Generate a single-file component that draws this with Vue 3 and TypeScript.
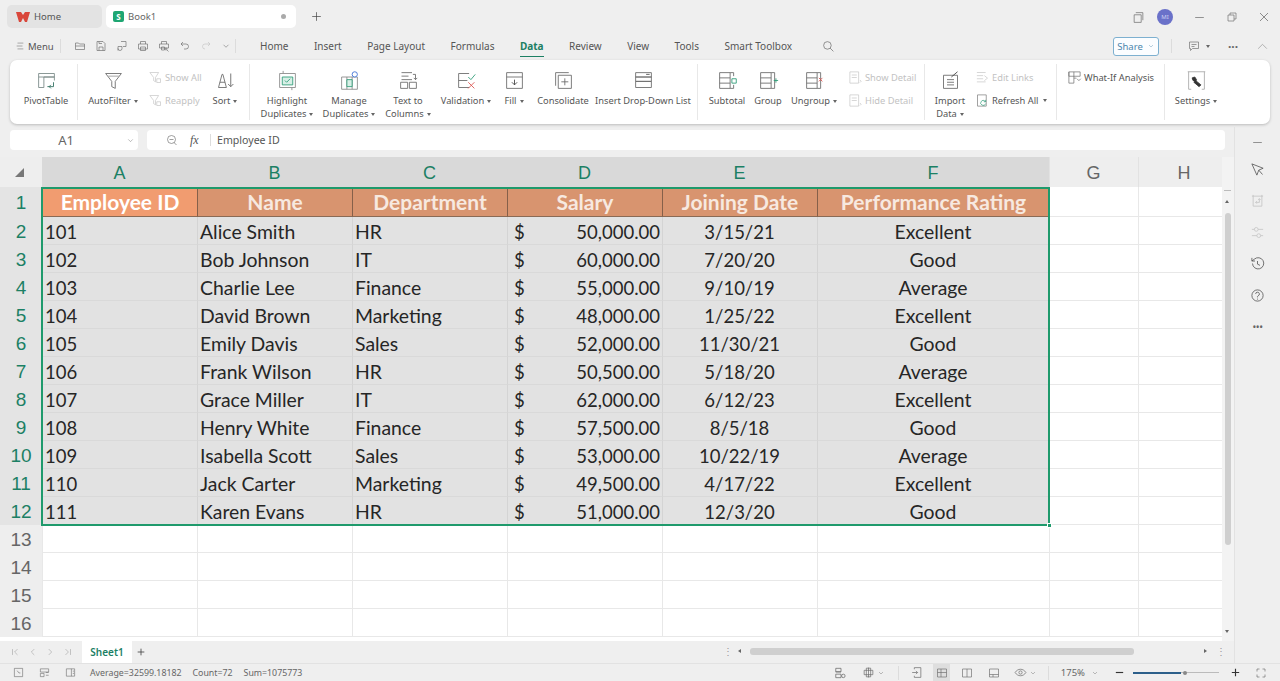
<script setup lang="ts">
import { h } from 'vue'

type Part = { d: string; c?: string; f?: string }
const G = '#6b6b6b'
const L = '#c4c4c4'
const icons: Record<string, Part[]> = {
  pivot: [{ d: 'M3 4h18v4H3zM3 8v12h6V8M9 8h12v4', c: '#7a8a88' }, { d: 'M13 19h7m0-5v5m-3-2-2 2 2 2', c: '#2f6f5f' }],
  filter: [{ d: 'M3 4h18l-7 9v8l-4-2v-6z' }, { d: 'M6 7h12', c: '#999' }],
  filterL: [{ d: 'M3 4h14l-5 8v7l-3-2v-5z', c: L }, { d: 'M14 14h6v6h-6z', c: L }],
  sort: [{ d: 'M4 20 8 5h1l4 15M5.500 14h6M4 20h9' }, { d: 'M18 4v15m-3-3 3 3 3-3', c: '#666' }],
  high: [{ d: 'M7 1v3M17 20v3M3 4h18v16H3z', c: '#8a8a8a' }, { d: 'M6 8h12v9H6z', c: '#2e9b77', f: '#d8efe6' }, { d: 'm9 12 2 2 4-4', c: '#2e9b77' }],
  manage: [{ d: 'M3 8h18v14H3zM9 8v14M15 8v14', c: '#8a8a8a' }, { d: 'M9 11h6v8H9z', c: '#2e9b77', f: '#d8efe6' }, { d: 'M21 5a3 3 0 1 1-6 0 3 3 0 0 1 6 0z', c: '#3b6fd4', f: '#fff' }],
  text: [{ d: 'M4 3h12M4 7h8M4 11h12M17 5h3v6m-2-2 2 2 2-2M3 14h8v7H3zM13 14h8v7h-8z' }],
  valid: [{ d: 'M3 4h12M3 4v16h12M3 12h10' }, { d: 'm14 8 3 3 5-6', c: '#2e9b77' }, { d: 'm14 14 7 7m0-7-7 7', c: '#d9534f' }],
  fill: [{ d: 'M3 3h18v18H3zM3 8h18' }, { d: 'M12 11v6m-3-3 3 3 3-3', c: '#444' }],
  cons: [{ d: 'M6 6h15v15H6zM3 18V3h15M13.500 9.500v8M9.500 13.500h8' }],
  drop: [{ d: 'M3 3h18v5H3zM3 8h18v5H3zM3 13h18v7H3z' }, { d: 'M15 5h4', c: '#555' }],
  sub: [{ d: 'M3 3h12v18H3zM3 9h12M3 15h12M15 3h4v4M15 21h4v-4' }, { d: 'M17 10h5v5h-5z', c: '#2e9b77' }],
  group: [{ d: 'M3 3h12v18H3zM3 9h12M3 15h12M15 3h4v18h-4' }, { d: 'M18 12h5m-2.500-2.500v5', c: '#2e9b77' }],
  ungroup: [{ d: 'M3 3h12v18H3zM3 9h12M3 15h12M15 3h4v18h-4' }, { d: 'm17 9 4 4m0-4-4 4', c: '#d9534f' }],
  detail: [{ d: 'M3 3h14v18H3zM6 8h8M6 12h8M19 16l2 2-2 2', c: L }],
  imp: [{ d: 'M4 6h16v15H4zM8 11h8M8 14h8M8 17h8' }, { d: 'm13 8 7-6', c: '#444' }],
  links: [{ d: 'M3 4h14M3 9h10M3 14h10M3 19h14M15 9l5 4-5 4', c: L }],
  refresh: [{ d: 'M4 3h14v18H4z', c: '#777' }, { d: 'M17 17a4 4 0 1 1-1-4l1 1m0-3v3h-3', c: '#2e9b77' }],
  whatif: [{ d: 'M3 3h18v7H3zM3 3v18h8V3M11 13h4' }, { d: 'm16 14 3 3 3-3', c: '#666' }],
  settings: [{ d: 'M2 2h20M3 2v20M21 2v20M3 22h3M18 22h3', c: '#aaa' }, { d: 'M7 9l3-1 2 3-1 2-3-1zM11 12l6 5-2 2-6-5z', c: '#333', f: '#333' }],
  folder: [{ d: 'M3 6h6l2 2h10v11H3zM3 12h18' }],
  save: [{ d: 'M4 3h12l4 4v14H4zM8 21v-7h8v7M8 3v4h6' }],
  share: [{ d: 'M10 3h10v10h-6M4 21v-8h8v4a4 4 0 0 1-8 0' }],
  print: [{ d: 'M7 8V3h10v5M3 8h18v10H3zM7 14h10v7H7z' }],
  preview: [{ d: 'M7 8V3h10v5M3 8h18v8H3zM7 14h6v6H7z' }, { d: 'M18 18a2 2 0 1 1-4 0 2 2 0 0 1 4 0zm0 2 3 3' }],
  undo: [{ d: 'M8 4 4 8l4 4M4 8h10a5 5 0 0 1 0 10h-4' }],
  redo: [{ d: 'm16 4 4 4-4 4M20 8H10a5 5 0 0 0 0 10', c: L }],
  chev: [{ d: 'm6 9 6 6 6-6' }],
  menu: [{ d: 'M6 5h14M4 12h14M6 19h14' }],
  search: [{ d: 'M17 10a7 7 0 1 1-14 0 7 7 0 0 1 14 0zm-2 5 6 6' }],
  dup: [{ d: 'M4 7h13v14H4zM7 3h13v14' }],
  min: [{ d: 'M4 12h16' }],
  restore: [{ d: 'M4 8h12v12H4zM8 8V4h12v12h-4' }],
  close: [{ d: 'm4 4 16 16M20 4 4 20' }],
  comment: [{ d: 'M3 4h18v13H9l-4 4v-4H3zM7 9h10M7 13h6' }],
  up: [{ d: 'm4 16 8-8 8 8' }],
  zoom: [{ d: 'M19 11a8 8 0 1 1-16 0 8 8 0 0 1 16 0zm-3 6 5 5M7 11h8' }],
  cursor: [{ d: 'm3 3 18 7-7 3-3 8zM14 13l6 7', c: '#555' }],
  crop: [{ d: 'M5 3v18h14V3M3 5h18M15 9v6H9m2-2-2 2 2 2M15 9l-2 2m2-2 2 2', c: L }],
  sliders: [{ d: 'M3 7h4m6 0h8M3 17h8m6 0h4M7 7a3 3 0 1 0 6 0 3 3 0 0 0-6 0zM11 17a3 3 0 1 0 6 0 3 3 0 0 0-6 0z', c: L }],
  history: [{ d: 'M4 12a9 9 0 1 0 3-7L3 8M3 3v5h5M12 8v5l4 2', c: '#555' }],
  help: [{ d: 'M21 12a9 9 0 1 1-18 0 9 9 0 0 1 18 0zM9 9.500a3 3 0 1 1 4 3c-1 .5-1 1-1 2.500M12 17v1.500', c: '#555' }],
  first: [{ d: 'M6 5v14M18 5l-7 7 7 7' }],
  prev: [{ d: 'm15 5-7 7 7 7' }],
  next: [{ d: 'm9 5 7 7-7 7' }],
  last: [{ d: 'M18 5v14M6 5l7 7-7 7' }],
  plus: [{ d: 'M12 4v16M4 12h16' }],
  clock: [{ d: 'M3 3h18v18H3zM9 8l4 5h3' }],
  layout: [{ d: 'M3 4h18v7H3zM3 14h8v7H3zM15 12h6M15 18h6' }],
  panel: [{ d: 'M3 4h18v16H3zM14 4v16M17 9h3M17 14h3' }],
  grid2: [{ d: 'M3 4h9v6H3zM3 14h9v6H3zM3 10h9' }, { d: 'M19 17a3 3 0 1 1-6 0 3 3 0 0 1 6 0z' }],
  globe: [{ d: 'M12 3v18M4 8h16v8H4zM8 4h8v16H8z' }],
  page: [{ d: 'M4 12h10M11 9l3 3-3 3M8 6V3h12v18H8v-3' }],
  normal: [{ d: 'M3 4h18v16H3zM10 4v16M3 11h18' }],
  read: [{ d: 'M3 4h18v16H3zM12 4v16' }],
  pageb: [{ d: 'M3 4h18v16H3zM3 15h18M10 15v5' }],
  eye: [{ d: 'M2 12c5-8 15-8 20 0-5 8-15 8-20 0zM15 12a3 3 0 1 1-6 0 3 3 0 0 1 6 0z' }],
  full: [{ d: 'M4 9V4h5M15 4h5v5M20 15v5h-5M9 20H4v-5' }]
}

const Ico = (p: { n: string; s?: number; c?: string; w?: number }) =>
  h('svg', { viewBox: '0 0 24 24', width: p.s ?? 14, height: p.s ?? 14, fill: 'none', style: 'flex:none;display:block;overflow:visible' },
    (icons[p.n] ?? []).map((x) => h('path', { d: x.d, stroke: x.c ?? p.c ?? G, fill: x.f ?? 'none', 'stroke-width': p.w ?? 1.300 })))

type Big = { label: string[]; icon: string; w: number; caret?: boolean }
type Small = { label: string; icon: string; off?: boolean; caret?: boolean }
type Item = { big?: Big; small?: Small[]; w?: number; pad?: number }
type Group = { w: number; items: Item[] }

const groups: Group[] = [
  { w: 68, items: [{ big: { label: ['PivotTable'], icon: 'pivot', w: 72 } }] },
  { w: 172, items: [
    { big: { label: ['AutoFilter'], icon: 'filter', w: 70, caret: true } },
    { small: [{ label: 'Show All', icon: 'filterL', off: true }, { label: 'Reapply', icon: 'filterL', off: true }], w: 52 },
    { big: { label: ['Sort'], icon: 'sort', w: 50, caret: true } }
  ] },
  { w: 448, items: [
    { big: { label: ['Highlight', 'Duplicates'], icon: 'high', w: 74, caret: true } },
    { big: { label: ['Manage', 'Duplicates'], icon: 'manage', w: 50, caret: true } },
    { big: { label: ['Text to', 'Columns'], icon: 'text', w: 68, caret: true } },
    { big: { label: ['Validation'], icon: 'valid', w: 48, caret: true } },
    { big: { label: ['Fill'], icon: 'fill', w: 48, caret: true } },
    { big: { label: ['Consolidate'], icon: 'cons', w: 50 } },
    { big: { label: ['Insert Drop-Down List'], icon: 'drop', w: 110 } }
  ] },
  { w: 227, items: [
    { big: { label: ['Subtotal'], icon: 'sub', w: 58 } },
    { big: { label: ['Group'], icon: 'group', w: 24 } },
    { big: { label: ['Ungroup'], icon: 'ungroup', w: 68, caret: true } },
    { small: [{ label: 'Show Detail', icon: 'detail', off: true }, { label: 'Hide Detail', icon: 'detail', off: true }], w: 77 }
  ] },
  { w: 132, items: [
    { big: { label: ['Import', 'Data'], icon: 'imp', w: 50, caret: true } },
    { small: [{ label: 'Edit Links', icon: 'links', off: true }, { label: 'Refresh All', icon: 'refresh', caret: true }], w: 78 }
  ] },
  { w: 108, items: [{ small: [{ label: 'What-If Analysis', icon: 'whatif' }], w: 100, pad: 10 }] },
  { w: 105, items: [{ big: { label: ['Settings'], icon: 'settings', w: 62, caret: true } }] }
]

const menuTabs = ['Home', 'Insert', 'Page Layout', 'Formulas', 'Data', 'Review', 'View', 'Tools', 'Smart Toolbox']
const quick = ['folder', 'save', 'share', 'print', 'preview', 'undo', 'redo', 'chev']
const columns = ['A', 'B', 'C', 'D', 'E', 'F', 'G', 'H']
const heads = ['Employee ID', 'Name', 'Department', 'Salary', 'Joining Date', 'Performance Rating']
const rows = [
  ['101', 'Alice Smith', 'HR', '50,000.00', '3/15/21', 'Excellent'],
  ['102', 'Bob Johnson', 'IT', '60,000.00', '7/20/20', 'Good'],
  ['103', 'Charlie Lee', 'Finance', '55,000.00', '9/10/19', 'Average'],
  ['104', 'David Brown', 'Marketing', '48,000.00', '1/25/22', 'Excellent'],
  ['105', 'Emily Davis', 'Sales', '52,000.00', '11/30/21', 'Good'],
  ['106', 'Frank Wilson', 'HR', '50,500.00', '5/18/20', 'Average'],
  ['107', 'Grace Miller', 'IT', '62,000.00', '6/12/23', 'Excellent'],
  ['108', 'Henry White', 'Finance', '57,500.00', '8/5/18', 'Good'],
  ['109', 'Isabella Scott', 'Sales', '53,000.00', '10/22/19', 'Average'],
  ['110', 'Jack Carter', 'Marketing', '49,500.00', '4/17/22', 'Excellent'],
  ['111', 'Karen Evans', 'HR', '51,000.00', '12/3/20', 'Good']
]
const emptyRows = [13, 14, 15, 16]
const sideIcons = ['cursor', 'crop', 'sliders', 'history', 'help']
</script>

<template>
  <div class="app">
    <header class="titlebar">
      <div class="tab home">
        <svg width="14" height="12" viewBox="0 0 14 12"><path d="M0 1h5l2 3 2-3h5l-3 10H9L7 7l-2 4H3z" fill="#d9473b" /></svg>
        <span>Home</span>
      </div>
      <div class="tab book">
        <span class="sbadge">S</span>
        <span>Book1</span>
        <i class="dot"></i>
      </div>
      <Ico n="plus" :s="13" c="#444" class="newtab" />
      <div class="winctl">
        <Ico n="dup" :s="13" />
        <span class="avatar">MI</span>
        <Ico n="min" :s="13" />
        <Ico n="restore" :s="12" />
        <Ico n="close" :s="12" c="#555" />
      </div>
    </header>

    <nav class="menubar">
      <div class="menubtn"><Ico n="menu" :s="10" /><span>Menu</span></div>
      <i class="vline"></i>
      <div class="quick"><Ico v-for="q in quick" :key="q" :n="q" :s="q === 'chev' ? 10 : 12" /></div>
      <i class="vline second"></i>
      <div class="menutabs">
        <span v-for="t in menuTabs" :key="t" :class="{ active: t === 'Data' }">{{ t }}</span>
      </div>
      <Ico n="search" :s="13" class="searchicon" />
      <div class="menuright">
        <button class="share">Share <Ico n="chev" :s="8" c="#5a8fb0" /></button>
        <i class="vline sharesep"></i>
        <div class="cmt"><Ico n="comment" :s="12" /><i class="caret"></i></div>
        <span class="more">···</span>
        <Ico n="up" :s="13" c="#999" class="upic" />
      </div>
    </nav>

    <section class="ribbon">
      <div v-for="(g, i) in groups" :key="i" class="group" :style="{ width: g.w + 'px' }">
        <template v-for="(it, j) in g.items" :key="j">
          <div v-if="it.big" class="big" :style="{ width: it.big.w + 'px' }">
            <Ico :n="it.big.icon" :s="21" :w="1" />
            <div class="biglabel">
              <div v-for="(l, k) in it.big.label" :key="k" class="line">{{ l }}<i v-if="it.big.caret && k === it.big.label.length - 1" class="caret"></i></div>
            </div>
          </div>
          <div v-else class="smalls" :style="{ width: it.w + 'px', paddingLeft: (it.pad ?? 0) + 'px' }">
            <div v-for="s in it.small" :key="s.label" class="small" :class="{ off: s.off }">
              <Ico :n="s.icon" :s="15" :w="1.100" />
              <span>{{ s.label }}</span>
              <i v-if="s.caret" class="caret"></i>
            </div>
          </div>
        </template>
      </div>
    </section>

    <div class="workarea">
      <div class="leftcol">
        <div class="formula">
          <div class="namebox"><span>A1</span><Ico n="chev" :s="9" c="#777" class="namechev" /></div>
          <div class="fxbox">
            <Ico n="zoom" :s="12" />
            <em>fx</em>
            <i class="fxline"></i>
            <span>Employee ID</span>
          </div>
        </div>

        <div class="gridwrap">
          <div class="sheet">
            <div class="corner"><i></i></div>
            <div v-for="(c, i) in columns" :key="c" class="colhead" :class="{ sel: i < 6 }">{{ c }}</div>

            <div class="rowhead first">1</div>
            <div v-for="(t, i) in heads" :key="t" class="hcell" :class="{ active: i === 0 }">{{ t }}</div>
            <div class="blank"></div><div class="blank"></div>

            <template v-for="(r, ri) in rows" :key="ri">
              <div class="rowhead">{{ ri + 2 }}</div>
              <div class="cell num">{{ r[0] }}</div>
              <div class="cell">{{ r[1] }}</div>
              <div class="cell">{{ r[2] }}</div>
              <div class="cell money num"><span>$</span><span>{{ r[3] }}</span></div>
              <div class="cell center num">{{ r[4] }}</div>
              <div class="cell center">{{ r[5] }}</div>
              <div class="blank"></div><div class="blank"></div>
            </template>

            <template v-for="n in emptyRows" :key="n">
              <div class="rowhead plain">{{ n }}</div>
              <div v-for="c in columns" :key="c" class="blank"></div>
            </template>

            <div class="selection"><i></i></div>
          </div>
          <div class="vscroll">
            <i class="vdash"></i>
            <i class="arrow up"></i>
            <i class="thumb"></i>
            <i class="arrow down"></i>
          </div>
        </div>

        <div class="sheetbar">
          <div class="navs">
            <Ico n="first" :s="10" c="#999" />
            <Ico n="prev" :s="10" c="#999" />
            <Ico n="next" :s="10" c="#999" />
            <Ico n="last" :s="10" c="#999" />
          </div>
          <div class="sheettab">Sheet1</div>
          <Ico n="plus" :s="10" c="#444" :w="2" />
          <div class="hscroll">
            <span class="colon">⋮</span>
            <i class="arrow left"></i>
            <i class="hthumb"></i>
            <i class="arrow right"></i>
            <span class="colon">⋮</span>
          </div>
        </div>
      </div>

      <aside class="side">
        <Ico n="min" :s="13" class="sidemin" />
        <Ico v-for="s in sideIcons" :key="s" :n="s" :s="15" />
        <span class="dots">•••</span>
      </aside>
    </div>

    <footer class="status">
      <div class="statusleft">
        <Ico n="clock" :s="11" />
        <Ico n="layout" :s="11" />
        <Ico n="panel" :s="11" />
      </div>
      <div class="stats">
        <span>Average=32599.18182</span>
        <span>Count=72</span>
        <span>Sum=1075773</span>
      </div>
      <div class="statusright">
        <Ico n="grid2" :s="14" />
        <div class="withchev g13"><Ico n="globe" :s="13" /><Ico n="chev" :s="8" /></div>
        <i class="vline g13"></i>
        <Ico n="page" :s="13" class="g10" />
        <span class="viewon g10"><Ico n="normal" :s="12" /></span>
        <Ico n="read" :s="12" class="g11" />
        <Ico n="pageb" :s="12" class="g14" />
        <div class="withchev g14"><Ico n="eye" :s="13" /><Ico n="chev" :s="8" /></div>
        <i class="vline g10"></i>
        <span class="pct g12">175%</span>
        <Ico n="chev" :s="8" class="g6" />
        <Ico n="min" :s="11" c="#333" :w="2.500" class="g14" />
        <div class="slider g8"><i class="fillbar"></i><i class="knob"></i></div>
        <Ico n="plus" :s="11" c="#333" :w="2.500" class="g10" />
        <Ico n="full" :s="12" class="g14" />
      </div>
    </footer>
  </div>
</template>

<style>
html, body { margin: 0; padding: 0; background: #efefef; }
</style>

<style scoped>
.app {
  width: 1280px; height: 681px; overflow: hidden; display: flex; flex-direction: column;
  background: #efefef; font-family: "Noto Sans", sans-serif; color: #555; font-size: 10px;
}
i { display: block; font-style: normal; }

.titlebar { height: 33px; flex: none; display: flex; align-items: flex-start; padding: 5px 0 0 7px; box-sizing: border-box; }
.tab { height: 23px; border-radius: 5px; display: flex; align-items: center; font-size: 9.500px; }
.home { width: 95px; background: #e3e3e3; padding-left: 9px; gap: 4px; box-sizing: border-box; margin-right: 4px; }
.book { width: 190px; background: #fff; padding: 0 10px 0 7px; gap: 4px; box-sizing: border-box; color: #666; }
.sbadge { width: 11px; height: 11px; border-radius: 2px; background: #1ea672; color: #fff; font-size: 8px; font-weight: 700; display: flex; align-items: center; justify-content: center; }
.dot { width: 5px; height: 5px; border-radius: 50%; background: #aaa; margin-left: auto; }
.newtab { margin: 5px 0 0 14px; }
.winctl { margin-left: auto; display: flex; align-items: center; gap: 20px; padding: 4px 10px 0 0; }
.avatar { width: 16px; height: 16px; border-radius: 50%; background: #6a71c9; color: #cfd2f4; font-size: 6px; display: flex; align-items: center; justify-content: center; margin: 0 0 0 -7.500px; }

.menubar { height: 26px; flex: none; display: flex; align-items: center; padding-left: 15px; box-sizing: border-box; }
.menubtn { display: flex; align-items: center; gap: 3px; color: #555; font-size: 9.500px; width: 45px; }
.vline { width: 1px; height: 14px; background: #dcdcdc; flex: none; }
.quick { display: flex; align-items: center; gap: 9px; margin-left: 13px; width: 158px; }
.second { margin-left: 3px; }
.menutabs { display: flex; gap: 25.500px; margin-left: 24px; font-size: 10px; color: #555; }
.menutabs span { position: relative; line-height: 16px; white-space: nowrap; }
.menutabs .active { color: #1c7f63; font-weight: 700; }
.menutabs .active::after { content: ""; position: absolute; left: 0; right: 0; bottom: -3px; height: 1.500px; background: #1c7f63; }
.searchicon { margin-left: 30px; }
.menuright { margin-left: auto; display: flex; align-items: center; padding-right: 11.500px; }
.share { width: 46px; height: 19px; border: 1px solid #7db0d0; border-radius: 3px; background: #fbfdff; color: #4b86ad; font: 9.500px "Noto Sans", sans-serif; display: flex; align-items: center; justify-content: center; gap: 4px; padding: 0; margin-left: -1px; }
.sharesep { margin-left: 12px; }
.cmt { display: flex; align-items: center; gap: 3px; margin-left: 16px; }
.more { font-size: 12px; color: #666; font-weight: 700; margin-left: 17px; width: 12px; text-align: center; }
.upic { margin-left: 16.500px; }
.caret { width: 0; height: 0; border-left: 2.500px solid transparent; border-right: 2.500px solid transparent; border-top: 3px solid #666; display: inline-block; margin-left: 3px; vertical-align: middle; }

.ribbon {
  height: 64px; flex: none; margin: 1px 10px 0; background: #fff; border-radius: 7px; display: flex;
  box-shadow: 0 1px 3px rgba(0, 0, 0, .22); box-sizing: border-box;
}
.group { display: flex; height: 64px; box-sizing: border-box; position: relative; flex: none; }
.group:not(:last-child)::after { content: ""; position: absolute; right: 0; top: 4px; bottom: 4px; width: 1px; background: #e8e8e8; }
.big { display: flex; flex-direction: column; align-items: center; padding-top: 10px; box-sizing: border-box; flex: none; }
.biglabel { margin-top: 4px; font-size: 9.300px; line-height: 12.500px; color: #555; text-align: center; white-space: nowrap; }
.line { white-space: nowrap; }
.smalls { display: flex; flex-direction: column; padding-top: 9px; gap: 7px; box-sizing: border-box; flex: none; }
.small { height: 16px; display: flex; align-items: center; gap: 2px; font-size: 9.300px; white-space: nowrap; color: #555; }
.small.off { color: #c2c2c2; }

.workarea { flex: 1; display: flex; min-height: 0; margin-top: 3px; }
.leftcol { width: 1234px; flex: none; display: flex; flex-direction: column; }
.formula { height: 30px; flex: none; display: flex; gap: 9px; padding: 3px 9px 7px 10px; box-sizing: border-box; }
.namebox { width: 128px; background: #fff; border-radius: 4px; position: relative; display: flex; align-items: center; justify-content: center; color: #666; font-size: 13px; box-sizing: border-box; padding-right: 16px; }
.namechev { position: absolute; right: 3px; top: 6px; }
.fxbox { flex: 1; background: #fff; border-radius: 4px; display: flex; align-items: center; padding-left: 19px; gap: 7px; box-sizing: border-box; font-size: 10.600px; }
.fxbox em { font: italic 12px "Liberation Serif", serif; color: #555; width: 13px; margin-left: 5px; }
.fxline { width: 1px; height: 12px; background: #ddd; margin-right: -1px; }

.gridwrap { display: flex; height: 484px; flex: none; overflow: hidden; }
.sheet {
  width: 1222px; flex: none; display: grid; position: relative; background: #fff; overflow: hidden;
  grid-template-columns: 42px repeat(5, 155px) 232px 89px 92px;
  grid-template-rows: 30px 30px repeat(15, 28px) 4px;
  font-family: "Lato", sans-serif;
}
.corner { background: #eee; display: flex; align-items: center; justify-content: center; }
.corner i { width: 0; height: 0; border-left: 9px solid transparent; border-bottom: 9px solid #777; margin-left: -3px; }
.colhead { background: #eee; display: flex; align-items: center; justify-content: center; font: 18px "Liberation Sans", sans-serif; color: #666; box-shadow: inset 1px 0 #e2e2e2; padding: 2px 0 0 0; box-sizing: border-box; }
.colhead.sel { background: #d9d9d9; color: #1c8064; box-shadow: none; }
.rowhead { background: #e4e4e4; display: flex; align-items: center; justify-content: center; font: 19px "Liberation Sans", sans-serif; color: #1c8064; padding-top: 2px; box-sizing: border-box; }
.rowhead.plain { background: #eee; color: #666; }
.hcell { background: #d8946f; color: #f7e9e0; font-size: 21px; font-weight: 700; display: flex; align-items: center; justify-content: center; border-left: 1px solid #85604a; border-bottom: 1px solid #8a6a55; box-sizing: border-box; white-space: nowrap; }
.hcell.active { background: #f19c70; color: #fff; }
.cell { background: #e2e2e2; color: #262626; font-size: 19.400px; display: flex; align-items: center; padding: 2px 3px 0 2px; box-sizing: border-box; border-left: 1px solid #d4d4d4; border-bottom: 1px solid #d9d9d9; white-space: nowrap; }
.num { font-size: 18.500px; }
.center { justify-content: center; }
.money { justify-content: space-between; padding: 2px 2px 0 6px; }
.blank { background: #fff; border-left: 1px solid #e8e8e8; border-bottom: 1px solid #e8e8e8; box-sizing: border-box; }
.selection { position: absolute; left: 41px; top: 30px; width: 1009px; height: 339px; border: 2px solid #1f9a6c; box-sizing: border-box; pointer-events: none; }
.selection i { position: absolute; right: -3.500px; bottom: -3.500px; width: 5px; height: 5px; background: #1f9a6c; border: 1px solid #fff; box-sizing: border-box; }

.vscroll { width: 12px; flex: none; background: #f3f3f3; position: relative; box-sizing: border-box; }
.vdash { position: absolute; left: 2px; top: 33px; width: 7px; height: 1px; background: #bbb; }
.arrow { position: absolute; width: 0; height: 0; }
.arrow.up { left: 3px; top: 43px; border-left: 2.500px solid transparent; border-right: 2.500px solid transparent; border-bottom: 3px solid #666; }
.arrow.down { left: 3px; top: 473px; border-left: 2.500px solid transparent; border-right: 2.500px solid transparent; border-top: 3px solid #666; }
.thumb { position: absolute; left: 3px; top: 56px; width: 6px; height: 332px; background: #cfcfcf; border-radius: 3px; }

.sheetbar { height: 22px; flex: none; display: flex; align-items: center; }
.navs { display: flex; gap: 7.500px; padding-left: 10px; width: 82px; box-sizing: border-box; }
.sheettab { width: 50px; height: 22px; background: #fff; color: #1c8064; font-weight: 600; font-size: 10px; display: flex; align-items: center; justify-content: center; margin-right: 4px; }
.hscroll { position: relative; margin-left: auto; width: 520px; height: 22px; }
.colon { position: absolute; top: 3px; left: 9px; font-size: 10px; color: #999; }
.colon:last-child { left: 502px; }
.arrow.left { left: 24px; top: 8px; border-top: 2.500px solid transparent; border-bottom: 2.500px solid transparent; border-right: 3px solid #666; }
.arrow.right { left: 490px; top: 8px; border-top: 2.500px solid transparent; border-bottom: 2.500px solid transparent; border-left: 3px solid #666; }
.hthumb { position: absolute; left: 36px; top: 7px; width: 384px; height: 7px; background: #cfcfcf; border-radius: 3px; }

.side { flex: 1; border-left: 1px solid #e2e2e2; display: flex; flex-direction: column; align-items: center; padding-top: 9px; gap: 16.500px; box-sizing: border-box; }
.sidemin { margin-bottom: -4px; }
.dots { font-size: 10px; color: #666; line-height: 14px; margin-top: 1px; letter-spacing: -.5px; }

.status { height: 18px; flex: none; display: flex; align-items: center; border-top: 1px solid #e2e2e2; box-sizing: border-box; padding-left: 13px; }
.statusleft { display: flex; gap: 15px; width: 77px; }
.stats { display: flex; gap: 11px; font-size: 8.800px; color: #666; }
.statusright { margin-left: auto; display: flex; align-items: center; padding-right: 13px; }
.g6 { margin-left: 6px; } .g8 { margin-left: 8.500px; } .g10 { margin-left: 10.500px; } .g11 { margin-left: 11px; }
.g12 { margin-left: 12px; } .g13 { margin-left: 13.500px; } .g14 { margin-left: 14.500px; }
.withchev { display: flex; align-items: center; gap: 2px; }
.viewon { width: 17px; height: 17px; background: #dedede; display: flex; align-items: center; justify-content: center; }
.pct { font-size: 9.500px; color: #666; }
.slider { width: 86px; height: 1px; background: #bbb; position: relative; }
.fillbar { position: absolute; left: 0; top: -.5px; width: 48px; height: 2px; background: #2c5f8a; }
.knob { position: absolute; left: 50px; top: -1.500px; width: 4px; height: 4px; border-radius: 50%; background: #888; }
</style>
